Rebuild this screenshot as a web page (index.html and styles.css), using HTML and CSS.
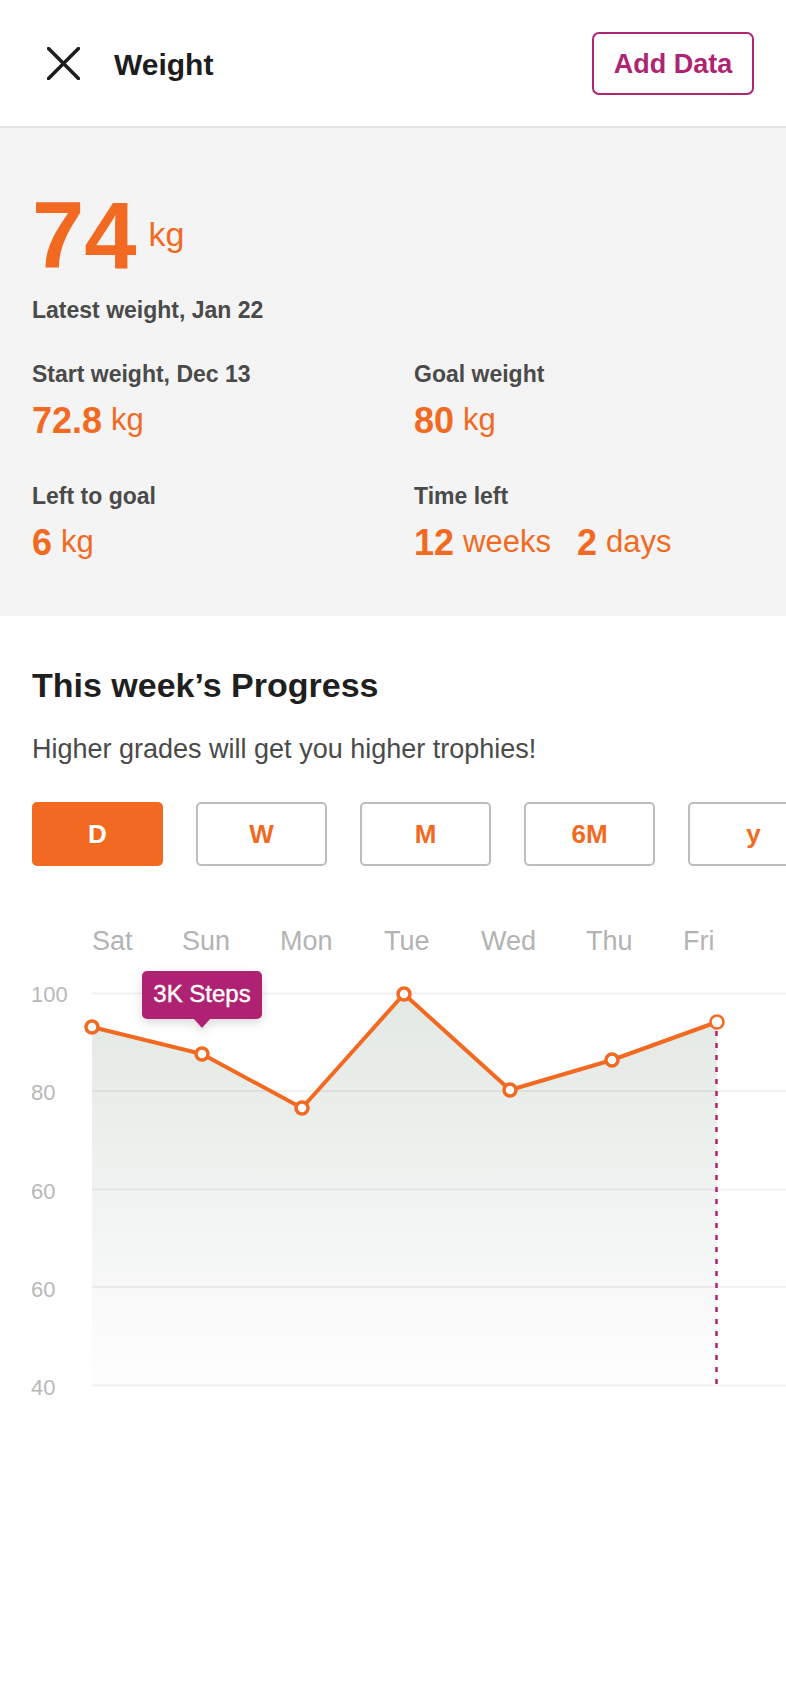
FILE: index.html
```html
<!DOCTYPE html>
<html lang="en">
<head>
<meta charset="utf-8">
<title>Weight</title>
<link rel="stylesheet" href="styles.css">
</head>
<body>
<header class="topbar">
  <svg class="close" viewBox="0 0 32 32" aria-label="Close">
    <path d="M1.5 1.5 L30.5 30.5 M30.5 1.5 L1.5 30.5" />
  </svg>
  <h1 class="title">Weight</h1>
  <button class="add-btn">Add Data</button>
</header>

<section class="summary">
  <div class="current">
    <span class="current-value">74</span>
    <span class="current-unit">kg</span>
  </div>
  <div class="latest">Latest weight, Jan 22</div>
  <div class="stats">
    <div class="stat">
      <div class="stat-label">Start weight, Dec 13</div>
      <div class="stat-value">72.8<span class="unit">kg</span></div>
    </div>
    <div class="stat">
      <div class="stat-label">Goal weight</div>
      <div class="stat-value">80<span class="unit">kg</span></div>
    </div>
    <div class="stat">
      <div class="stat-label">Left to goal</div>
      <div class="stat-value">6<span class="unit">kg</span></div>
    </div>
    <div class="stat">
      <div class="stat-label">Time left</div>
      <div class="stat-value">12<span class="unit">weeks</span><span class="num-next">2</span><span class="unit">days</span></div>
    </div>
  </div>
</section>

<section class="progress">
  <h2 class="progress-title">This week’s Progress</h2>
  <p class="progress-sub">Higher grades will get you higher trophies!</p>
  <div class="tabs">
    <button class="tab active">D</button>
    <button class="tab">W</button>
    <button class="tab">M</button>
    <button class="tab">6M</button>
    <button class="tab">y</button>
  </div>
</section>

<div class="chart">
  <svg width="786" height="510" viewBox="0 0 786 510">
    <defs>
      <linearGradient id="areaFill" gradientUnits="userSpaceOnUse" x1="0" y1="94" x2="0" y2="486">
        <stop offset="0" stop-color="#e2e8e3"/>
        <stop offset="1" stop-color="#fefefe"/>
      </linearGradient>
      <filter id="tipShadow" x="-30%" y="-40%" width="160%" height="200%">
        <feDropShadow dx="0" dy="4" stdDeviation="5" flood-color="#000" flood-opacity="0.14"/>
      </filter>
    </defs>

    <text class="day" x="92" y="50">Sat</text>
    <text class="day" x="182" y="50">Sun</text>
    <text class="day" x="280" y="50">Mon</text>
    <text class="day" x="384" y="50">Tue</text>
    <text class="day" x="481" y="50">Wed</text>
    <text class="day" x="586" y="50">Thu</text>
    <text class="day" x="683" y="50">Fri</text>

    <polygon class="area" points="92,127 202,154 302,208 404,94 510,190 612,160 717,122 717,486 92,486"/>

    <g class="grid">
      <line x1="92" y1="93.5" x2="786" y2="93.5"/>
      <line x1="92" y1="191" x2="786" y2="191"/>
      <line x1="92" y1="289.5" x2="786" y2="289.5"/>
      <line x1="92" y1="387" x2="786" y2="387"/>
      <line x1="92" y1="485.5" x2="786" y2="485.5"/>
    </g>

    <text class="ylab" x="31" y="102">100</text>
    <text class="ylab" x="31" y="200">80</text>
    <text class="ylab" x="31" y="299">60</text>
    <text class="ylab" x="31" y="397">60</text>
    <text class="ylab" x="31" y="495">40</text>

    <line class="marker" x1="716.5" y1="131" x2="716.5" y2="486"/>

    <polyline class="line" points="92,127 202,154 302,208 404,94 510,190 612,160 717,122"/>
    <g class="dots">
      <circle cx="92" cy="127" r="6"/>
      <circle cx="202" cy="154" r="6"/>
      <circle cx="302" cy="208" r="6"/>
      <circle cx="404" cy="94" r="6"/>
      <circle cx="510" cy="190" r="6"/>
      <circle cx="612" cy="160" r="6"/>
      <circle class="dot-last" cx="717" cy="122" r="6.5"/>
    </g>

    <g class="tip" filter="url(#tipShadow)">
      <rect x="142" y="71" width="120" height="48" rx="5"/>
      <polygon points="193,118 211,118 202,128"/>
    </g>
    <text class="tip-text" x="202" y="102">3K Steps</text>
  </svg>
</div>
</body>
</html>
```

FILE: styles.css
```css
* {
  box-sizing: border-box;
}

body {
  margin: 0;
  width: 786px;
  overflow-x: hidden;
  background: #ffffff;
  font-family: "Liberation Sans", Arial, sans-serif;
}

/* Header */
.topbar {
  height: 128px;
  display: flex;
  align-items: center;
  padding: 0 32px 0 47px;
  border-bottom: 2px solid #e4e4e4;
  background: #ffffff;
}

.close {
  width: 33px;
  height: 33px;
  margin-right: 34px;
  flex: 0 0 33px;
}

.close path {
  stroke: #1d1d1d;
  stroke-width: 3.4;
  stroke-linecap: round;
  fill: none;
}

.title {
  flex: 1;
  margin: 4px 0 0;
  font-size: 30px;
  line-height: 34px;
  font-weight: 700;
  color: #1d1d1d;
}

.add-btn {
  width: 162px;
  height: 63px;
  padding: 2px 0 0;
  border: 2px solid #af2472;
  border-radius: 7px;
  background: #ffffff;
  color: #af2472;
  font-family: "Liberation Sans", Arial, sans-serif;
  font-size: 27px;
  font-weight: 700;
  display: flex;
  align-items: center;
  justify-content: center;
}

/* Summary */
.summary {
  background: #f4f4f4;
  padding: 61px 32px 51px;
}

.current {
  display: flex;
  align-items: flex-start;
}

.current-value {
  font-size: 94px;
  line-height: 94px;
  font-weight: 700;
  color: #f26a22;
}

.current-unit {
  font-size: 34px;
  line-height: 34px;
  color: #f26a22;
  margin: 28px 0 0 12px;
}

.latest {
  margin-top: 13px;
  font-size: 23px;
  line-height: 28px;
  font-weight: 700;
  color: #4a4a4a;
}

.stats {
  display: grid;
  grid-template-columns: 1fr 1fr;
  column-gap: 42px;
  row-gap: 39px;
  margin-top: 36px;
}

.stat-label {
  font-size: 23px;
  line-height: 28px;
  font-weight: 700;
  color: #4a4a4a;
}

.stat-value {
  margin-top: 10px;
  font-size: 36px;
  line-height: 44px;
  font-weight: 700;
  color: #f26a22;
  white-space: nowrap;
}

.unit {
  font-size: 31px;
  font-weight: 400;
  margin-left: 9px;
  vertical-align: 3px;
}

.num-next {
  margin-left: 26px;
}

/* Progress */
.progress {
  padding: 49px 32px 0;
}

.progress-title {
  margin: 0;
  font-size: 34px;
  line-height: 40px;
  font-weight: 700;
  color: #1f1f1f;
}

.progress-sub {
  margin: 28px 0 0;
  font-size: 27px;
  line-height: 32px;
  color: #4a4a4a;
}

.tabs {
  display: flex;
  gap: 33px;
  margin-top: 37px;
}

.tab {
  flex: 0 0 131px;
  height: 64px;
  border: 2px solid #bdbdbd;
  border-radius: 5px;
  background: #ffffff;
  color: #f26a22;
  font-family: "Liberation Sans", Arial, sans-serif;
  font-size: 26px;
  font-weight: 700;
  display: flex;
  align-items: center;
  justify-content: center;
  padding: 0;
}

.tab.active {
  background: #f26a22;
  border-color: #f26a22;
  color: #ffffff;
}

/* Chart */
.chart {
  margin-top: 34px;
}

.chart svg {
  display: block;
}

.day {
  font-family: "Liberation Sans", Arial, sans-serif;
  font-size: 27px;
  fill: #b3b3b3;
}

.ylab {
  font-family: "Liberation Sans", Arial, sans-serif;
  font-size: 22px;
  fill: #b8b8b8;
}

.area {
  fill: url(#areaFill);
}

.grid line {
  stroke: rgba(0, 0, 0, 0.055);
  stroke-width: 2;
}

.marker {
  stroke: #af2472;
  stroke-width: 2.5;
  stroke-dasharray: 5 7;
}

.line {
  fill: none;
  stroke: #f26a22;
  stroke-width: 4;
  stroke-linejoin: round;
  stroke-linecap: round;
}

.dots circle {
  fill: #ffffff;
  stroke: #f26a22;
  stroke-width: 3.5;
}

.dots .dot-last {
  stroke-width: 2.5;
}

.tip rect,
.tip polygon {
  fill: #af2472;
}

.tip-text {
  font-family: "Liberation Sans", Arial, sans-serif;
  font-size: 24px;
  fill: #ffffff;
  stroke: #ffffff;
  stroke-width: 0.4;
  text-anchor: middle;
}
```
